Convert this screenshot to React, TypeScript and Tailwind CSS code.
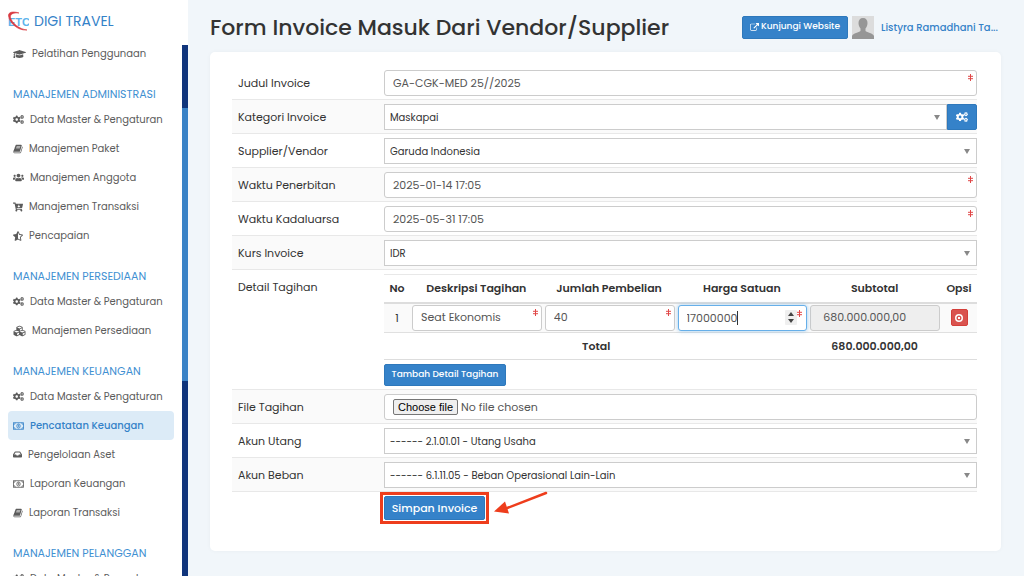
import React, { useState } from 'react';
import {
  FaCartArrowDown,
  FaCogs,
  FaCubes,
  FaGraduationCap,
  FaInbox,
  FaStarHalfAlt,
  FaUsers
} from 'react-icons/fa';

interface MenuItem {
  label: string;
  icon: React.ReactNode;
  active?: boolean;
}

interface MenuGroup {
  title: string;
  items: MenuItem[];
}

function BookIcon({ className }: { className?: string }) {
  return (
    <svg viewBox="0 0 1792 1792" fill="currentColor" className={className} aria-hidden="true">
      <path d="M1703 478q40 57 18 129l-275 906q-19 64-76.500 107.500t-122.500 43.500h-923q-77 0-148.500-53.500t-99.500-131.500q-24-67-2-127 0-4 3-27t4-37q1-8-3-21.500t-3-19.500q2-11 8-21t16.500-23.500 16.500-23.500q23-38 45-91.500t30-91.500q3-10 .5-30t-.5-28q3-11 17-28t17-23q21-36 42-92t25-90q1-9-2.500-32t.5-28q4-13 22-30.500t22-22.500q19-26 42.500-84.500t27.500-96.500q1-8-3-25.500t-2-26.500q2-8 9-18t18-23 17-21q8-12 16.500-30.500t15-35 16-36 19.500-32 26.500-23.500 36-11.500 47.500 5.500l-1 3q38-9 51-9h761q74 0 114 56t18 130l-274 906q-36 119-71.500 153.500t-128.500 34.500h-869q-27 0-38 15-11 16-1 43 24 70 144 70h923q29 0 56-15.500t35-41.500l300-987q7-22 5-57 38 15 59 43zm-1064 2q-4 13 2 22.500t20 9.500h608q13 0 25.500-9.500t16.500-22.500l21-64q4-13-2-22.500t-20-9.500h-608q-13 0-25.500 9.500t-16.500 22.500zm-83 256q-4 13 2 22.500t20 9.500h608q13 0 25.500-9.500t16.500-22.500l21-64q4-13-2-22.500t-20-9.500h-608q-13 0-25.500 9.500t-16.500 22.500z" />
    </svg>
  );
}

function MoneyIcon({ className }: { className?: string }) {
  return (
    <svg viewBox="0 0 22 16" fill="none" stroke="currentColor" strokeWidth="1.6" className={className} aria-hidden="true">
      <rect x="1" y="1.500" width="20" height="13" />
      <path d="M1 5a3.500 3.500 0 0 0 3.500-3.500M17.500 1.500A3.500 3.500 0 0 0 21 5M21 11a3.500 3.500 0 0 0-3.500 3.500M4.500 14.500A3.500 3.500 0 0 0 1 11" />
      <ellipse cx="11" cy="8" rx="3.400" ry="4.200" />
      <path d="M9.800 6.500 11.300 5.500v4.800" />
    </svg>
  );
}

function ExternalLinkIcon({ className }: { className?: string }) {
  return (
    <svg viewBox="0 0 1792 1792" fill="currentColor" className={className} aria-hidden="true">
      <path d="M1408 928v320q0 119-84.500 203.500t-203.500 84.500h-832q-119 0-203.500-84.500t-84.500-203.500v-832q0-119 84.500-203.500t203.500-84.500h704q14 0 23 9t9 23v64q0 14-9 23t-23 9h-704q-66 0-113 47t-47 113v832q0 66 47 113t113 47h832q66 0 113-47t47-113v-320q0-14 9-23t23-9h64q14 0 23 9t9 23zm384-864v512q0 26-19 45t-45 19-45-19l-176-176-652 652q-10 10-23 10t-23-10l-114-114q-10-10-10-23t10-23l652-652-176-176q-19-19-19-45t19-45 45-19h512q26 0 45 19t19 45z" />
    </svg>
  );
}

const cogs = <FaCogs className="h-[11px] w-[11px]" />;
const book = <BookIcon className="h-[10px] w-[10px]" />;
const money = <MoneyIcon className="h-[8px] w-[11px]" />;

const MENU: MenuGroup[] = [
  {
    title: 'MANAJEMEN ADMINISTRASI',
    items: [
      { label: 'Data Master & Pengaturan', icon: cogs },
      { label: 'Manajemen Paket', icon: book },
      { label: 'Manajemen Anggota', icon: <FaUsers className="h-[11px] w-[11px]" /> },
      { label: 'Manajemen Transaksi', icon: <FaCartArrowDown className="h-[10px] w-[10px]" /> },
      { label: 'Pencapaian', icon: <FaStarHalfAlt className="h-[10px] w-[10px]" /> }
    ]
  },
  {
    title: 'MANAJEMEN PERSEDIAAN',
    items: [
      { label: 'Data Master & Pengaturan', icon: cogs },
      { label: 'Manajemen Persediaan', icon: <FaCubes className="h-[12px] w-[13px]" /> }
    ]
  },
  {
    title: 'MANAJEMEN KEUANGAN',
    items: [
      { label: 'Data Master & Pengaturan', icon: cogs },
      { label: 'Pencatatan Keuangan', icon: money, active: true },
      { label: 'Pengelolaan Aset', icon: <FaInbox className="h-[9px] w-[9px]" /> },
      { label: 'Laporan Keuangan', icon: money },
      { label: 'Laporan Transaksi', icon: book }
    ]
  },
  {
    title: 'MANAJEMEN PELANGGAN',
    items: [{ label: 'Data Master & Pengaturan', icon: cogs }]
  }
];

function SidebarLink({ item }: { item: MenuItem }) {
  return (
    <a
      href="#"
      className={`mx-2 flex h-[29px] items-center gap-[6px] rounded pl-[5px] text-[10px] whitespace-nowrap ${
        item.active ? 'bg-[#dcebf7] font-medium text-[#3582c8]' : 'text-[#5c5c5c]'
      }`}
    >
      <span className="shrink-0">{item.icon}</span>
      <span>{item.label}</span>
    </a>
  );
}

function Sidebar() {
  return (
    <aside className="flex h-screen w-[188px] shrink-0 overflow-hidden bg-white">
      <div className="min-w-0 flex-1 overflow-hidden">
        <div className="flex h-[39px] items-center gap-[5px] pt-1 pl-[7px]">
          <svg viewBox="0 0 22 21" className="h-[21px] w-[22px]" aria-hidden="true">
            <text x="1" y="15" fontSize="11" fontWeight="700" fontFamily="Liberation Sans, sans-serif" fill="#5db4ec">
              ETC
            </text>
            <path d="M12 2C6 0 1 1 1.500 5 2.500 12 11 20 20 19c-8-1-15-7-16.500-12.500C3 3 6 1.500 12 2z" fill="#d93a42" stroke="#d93a42" strokeWidth="0.600" />
          </svg>
          <span className="text-[14px] text-[#3582c8]">DIGI TRAVEL</span>
        </div>
        <nav>
          <SidebarLink item={{ label: 'Pelatihan Penggunaan', icon: <FaGraduationCap className="h-[12px] w-[13px]" /> }} />
          {MENU.map(group => (
            <div key={group.title}>
              <h2 className="h-[37px] pt-4 pl-[13px] text-[11px] leading-[21px] whitespace-nowrap text-[#3f90d2]">{group.title}</h2>
              {group.items.map(item => (
                <SidebarLink key={item.label} item={item} />
              ))}
            </div>
          ))}
        </nav>
      </div>

      {/* Scroll track */}
      <div className="flex w-[6px] flex-col pt-[45px]">
        <div className="flex-1 bg-[#10357c] pt-[63px]">
          <div className="h-[273px] bg-[#3a82c6]" />
        </div>
      </div>
    </aside>
  );
}

function Required() {
  return (
    <svg viewBox="0 0 5 7" className="pointer-events-none absolute top-1 right-1 h-[7px] w-[5px]" aria-hidden="true">
      <path d="M2.500 0v7M0 2.300h5M0 4.700h5" stroke="#e04848" strokeWidth="1" />
    </svg>
  );
}

interface FieldProps {
  id: string;
  value: string;
  label?: string;
}

function TextField({ id, value, label }: FieldProps) {
  const [text, setText] = useState(value);
  return (
    <div className="relative">
      <input
        id={id}
        aria-label={label}
        value={text}
        onChange={e => setText(e.target.value)}
        className="block h-[26px] w-full rounded-[3px] border border-[#ccc] bg-white px-2 text-[11px] text-[#555] outline-none"
      />
      <Required />
    </div>
  );
}

function SelectField({ id, value }: FieldProps) {
  return (
    <div className="relative flex-1">
      <select id={id} className="block h-[26px] w-full appearance-none border border-[#ccc] bg-white pr-5 pl-[5px] text-[10px] text-[#333] outline-none">
        <option>{value}</option>
      </select>
      <svg viewBox="0 0 6 5" className="pointer-events-none absolute top-[11px] right-[7px] h-[5px] w-[6px]" aria-hidden="true">
        <path d="M0 0h6L3 5z" fill="#888" />
      </svg>
    </div>
  );
}

function FormRow({ label, htmlFor, children }: { label: string; htmlFor?: string; children: React.ReactNode }) {
  return (
    <div className="flex border-t border-[#e8e8e8] first:border-transparent odd:bg-white even:bg-[#fafafa]">
      <label htmlFor={htmlFor} className="w-[152px] shrink-0 pt-1 pl-[6px] text-[11px] leading-[26px] text-[#333]">
        {label}
      </label>
      <div className="min-w-0 flex-1 pt-1 pb-[3px]">{children}</div>
    </div>
  );
}

function DetailTable() {
  const [price, setPrice] = useState('17000000');
  return (
    <table className="w-full table-fixed border-collapse text-[11px] text-[#333]">
      <thead>
        <tr className="h-[28px] border-t border-b-2 border-t-[#e8e8e8] border-b-[#ddd]">
          <th className="w-[26px] font-semibold">No</th>
          <th className="font-semibold">Deskripsi Tagihan</th>
          <th className="font-semibold">Jumlah Pembelian</th>
          <th className="font-semibold">Harga Satuan</th>
          <th className="font-semibold">Subtotal</th>
          <th className="w-[36px] font-semibold">Opsi</th>
        </tr>
      </thead>
      <tbody>
        <tr className="h-[30px] border-b border-[#e0e0e0] bg-[#fafafa]">
          <td className="text-center">1</td>
          <td className="pr-px pl-[2px]">
            <TextField id="deskripsi" value="Seat Ekonomis" label="Deskripsi Tagihan" />
          </td>
          <td className="pr-px pl-[2px]">
            <TextField id="jumlah" value="40" label="Jumlah Pembelian" />
          </td>
          <td className="pr-px pl-[2px]">
            <div className="relative flex h-[26px] items-center rounded-[3px] border border-[#66afe9] bg-white pl-2 shadow-[0_0_4px_rgba(102,175,233,0.6)]">
              <input
                aria-label="Harga Satuan"
                inputMode="numeric"
                value={price}
                onChange={e => setPrice(e.target.value)}
                className="max-w-[90px] text-[11px] text-[#555] caret-transparent outline-none [field-sizing:content]"
              />
              <span className="h-[14px] w-px bg-[#333]" />
              <svg viewBox="0 0 12 15" className="mr-[9px] ml-auto h-[15px] w-[12px]" aria-hidden="true">
                <rect width="12" height="15" rx="1" fill="#efefef" />
                <path d="M3 6l3-4 3 4zM3 9h6l-3 4z" fill="#444" />
              </svg>
              <Required />
            </div>
          </td>
          <td className="pr-px pl-[2px]">
            <input
              aria-label="Subtotal"
              readOnly
              value="680.000.000,00"
              className="block h-[26px] w-full rounded-[3px] border border-[#ccc] bg-[#eee] px-[12px] text-[11px] text-[#555] outline-none"
            />
          </td>
          <td>
            <button aria-label="Hapus" className="mx-auto flex h-[17px] w-[17px] items-center justify-center rounded-[2px] border border-[#d43f3a] bg-[#d9534f] text-white">
              <svg viewBox="0 0 16 16" fill="none" stroke="currentColor" className="h-[8px] w-[8px]" aria-hidden="true">
                <circle cx="8" cy="8" r="6.500" strokeWidth="3" />
                <path d="M6 6l4 4M10 6l-4 4" strokeWidth="2" />
              </svg>
            </button>
          </td>
        </tr>
        <tr className="h-[27px] border-b border-[#ddd] font-semibold">
          <td colSpan={4} className="text-center">Total</td>
          <td className="text-center">680.000.000,00</td>
          <td />
        </tr>
      </tbody>
    </table>
  );
}

export default function App() {
  return (
    <div className="flex min-h-screen bg-[#f1f6fa] font-['Poppins','Inter',sans-serif]">
      <Sidebar />

      <main className="min-w-0 flex-1 pr-[23px] pb-6 pl-[22px]">
        <header className="flex h-[52px] items-center pt-[2px]">
          <h1 className="flex-1 text-[22px] font-medium whitespace-nowrap text-[#333]">Form Invoice Masuk Dari Vendor/Supplier</h1>
          <a href="#" className="flex h-[23px] w-[106px] items-center justify-center gap-[2px] rounded-[2px] border border-[#2e78bb] bg-[#3582c9] text-[9px] font-medium whitespace-nowrap text-white">
            <ExternalLinkIcon className="h-[9px] w-[9px]" />
            Kunjungi Website
          </a>
          <svg viewBox="0 0 22 23" className="ml-1 h-[23px] w-[22px]" aria-hidden="true">
            <rect width="22" height="23" fill="#dcdcdc" />
            <path d="M11 2c-3 0-4.500 2-4.500 5 0 2.500 1 4.500 2 5.500v2.500C7 16.500 1 17 0 20v3h22v-3c-1-3-7-3.500-8.500-5v-2.500c1-1 2-3 2-5.500 0-3-1.500-5-4.500-5z" fill="#969696" />
          </svg>
          <a href="#" className="ml-[7px] w-[120px] text-[10px] font-medium whitespace-nowrap text-[#3582c8]">Listyra Ramadhani Ta...</a>
        </header>

        <form className="rounded-[5px] bg-white pt-[13px] pr-6 pb-[31px] pl-[22px] shadow-[0_0_4px_rgba(0,0,0,0.04)]" onSubmit={e => e.preventDefault()}>
          <div>
            <FormRow label="Judul Invoice" htmlFor="judul">
              <TextField id="judul" value="GA-CGK-MED 25//2025" />
            </FormRow>
            <FormRow label="Kategori Invoice" htmlFor="kategori">
              <div className="flex">
                <SelectField id="kategori" value="Maskapai" />
                <button aria-label="Pengaturan kategori" className="flex h-[26px] w-[30px] items-center justify-center rounded-r-[2px] border border-[#2e78bb] bg-[#3582c9] text-white">
                  <FaCogs className="h-[12px] w-[12px]" />
                </button>
              </div>
            </FormRow>
            <FormRow label="Supplier/Vendor" htmlFor="supplier">
              <SelectField id="supplier" value="Garuda Indonesia" />
            </FormRow>
            <FormRow label="Waktu Penerbitan" htmlFor="penerbitan">
              <TextField id="penerbitan" value="2025-01-14 17:05" />
            </FormRow>
            <FormRow label="Waktu Kadaluarsa" htmlFor="kadaluarsa">
              <TextField id="kadaluarsa" value="2025-05-31 17:05" />
            </FormRow>
            <FormRow label="Kurs Invoice" htmlFor="kurs">
              <SelectField id="kurs" value="IDR" />
            </FormRow>
            <FormRow label="Detail Tagihan" htmlFor="deskripsi">
              <DetailTable />
              <button className="mt-1 block h-[22px] w-[122px] rounded-[2px] border border-[#2e78bb] bg-[#3582c9] text-[9px] font-medium whitespace-nowrap text-white">
                Tambah Detail Tagihan
              </button>
            </FormRow>
            <FormRow label="File Tagihan" htmlFor="file">
              <div className="flex h-[26px] items-center gap-[3px] rounded-[3px] border border-[#ccc] bg-white pl-2 text-[11px] text-[#555]">
                <input id="file" type="file" className="hidden" />
                <label htmlFor="file" className="rounded-[2px] border border-[#767676] bg-[#efefef] px-1 font-['Liberation_Sans',sans-serif] leading-[14px] text-black">
                  Choose file
                </label>
                <span>No file chosen</span>
              </div>
            </FormRow>
            <FormRow label="Akun Utang" htmlFor="utang">
              <SelectField id="utang" value="------ 2.1.01.01 - Utang Usaha" />
            </FormRow>
            <FormRow label="Akun Beban" htmlFor="beban">
              <SelectField id="beban" value="------ 6.1.11.05 - Beban Operasional Lain-Lain" />
            </FormRow>
          </div>

          <div className="flex border-t border-[#e8e8e8] pt-1 pl-[152px]">
            <div className="relative outline-[3px] outline-offset-1 outline-[#ee3d1c]">
              <button type="submit" className="block h-6 w-[101px] rounded-[2px] border border-[#2e78bb] bg-[#3582c9] text-[11px] font-medium text-white">
                Simpan Invoice
              </button>
              {/* Pointer to the save button */}
              <svg viewBox="0 0 54 24" className="absolute -top-[5px] left-[110px] h-6 w-[54px]" aria-hidden="true">
                <path d="M52 2 12 17.500" stroke="#ee3d1c" strokeWidth="2.500" strokeLinecap="round" />
                <path d="M0 20.500 11 10.500 15 22.500z" fill="#ee3d1c" />
              </svg>
            </div>
          </div>
        </form>
      </main>
    </div>
  );
}
